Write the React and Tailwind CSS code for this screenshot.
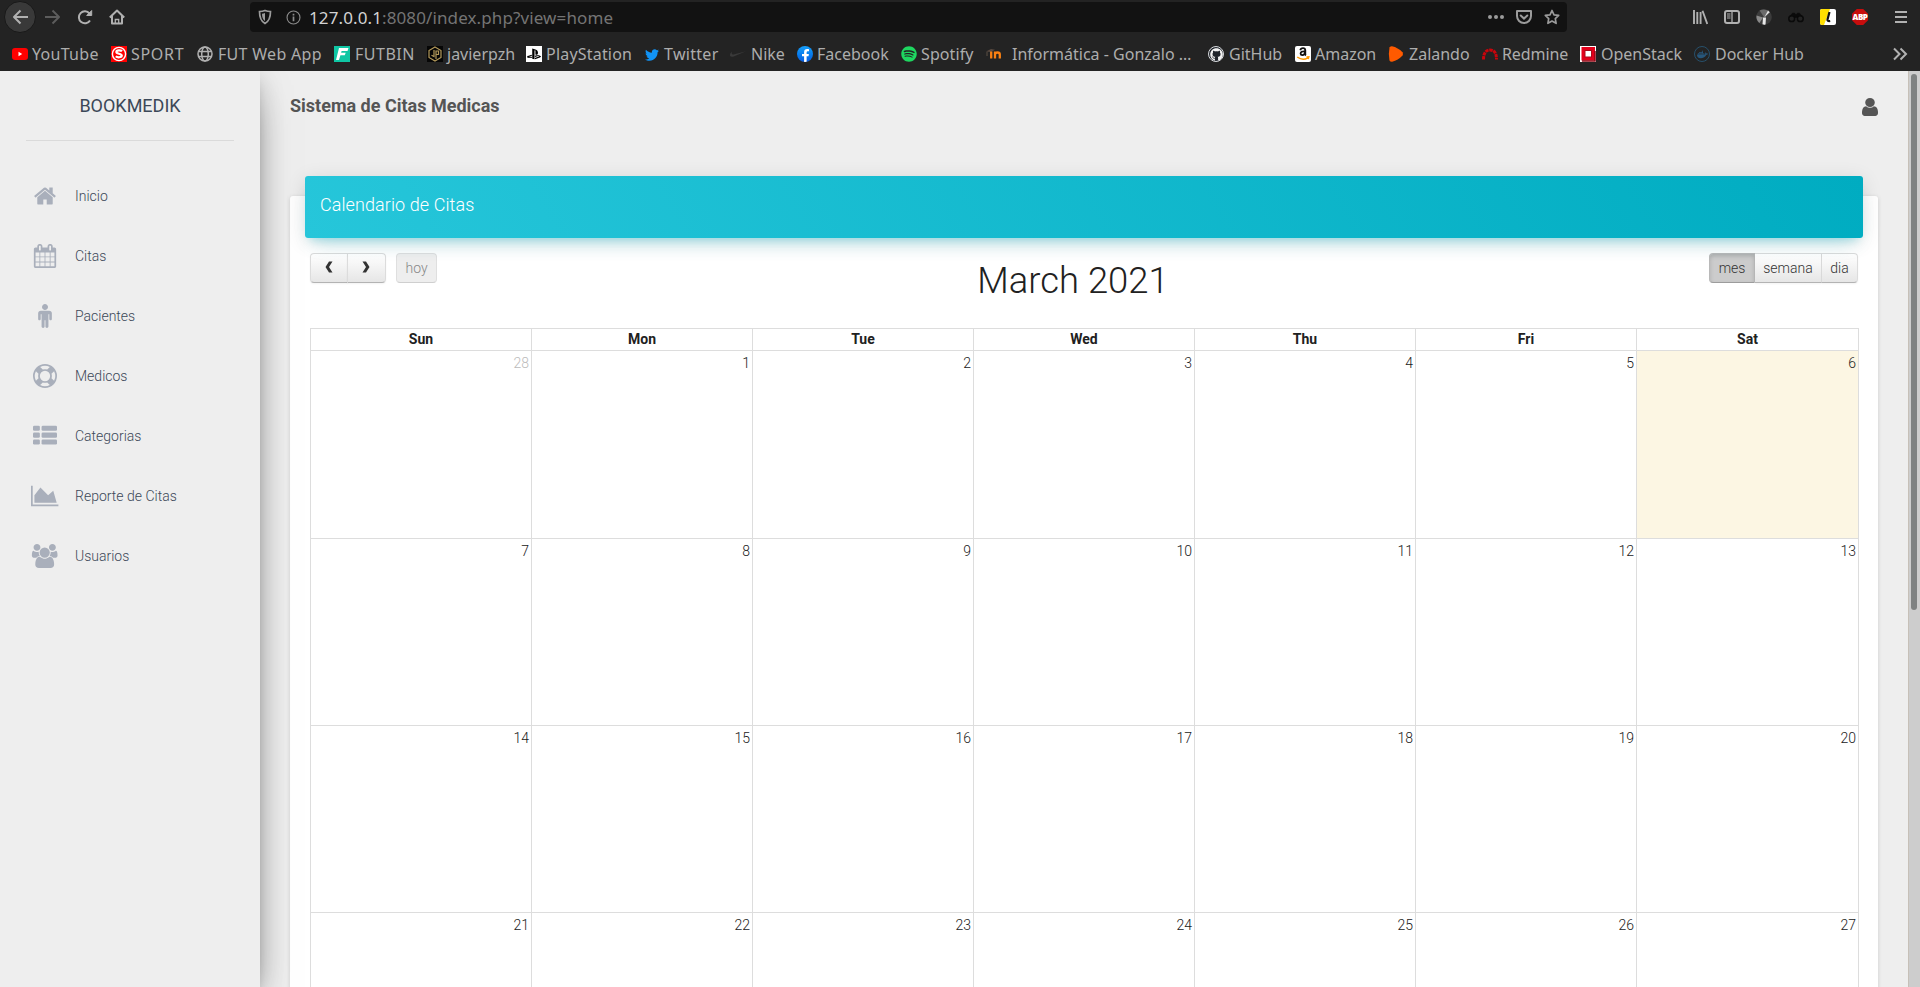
import React from "react";
import { FaTwitter, FaGithub, FaPlaystation, FaDocker, FaSpotify, FaFacebookF } from "react-icons/fa";
import { SiNike } from "react-icons/si";

/* ---------- bookmark favicons (16x16) ---------- */

const YouTubeIcon = () => (
  <svg viewBox="0 0 16 16" className="size-4">
    <rect x="0" y="2" width="16" height="12" rx="3" fill="#f00" />
    <path d="M6.5 5.8v4.4L10.2 8z" fill="#fff" />
  </svg>
);
const SportIcon = () => (
  <svg viewBox="0 0 16 16" className="size-4">
    <rect width="16" height="16" fill="#f00" />
    <circle cx="8" cy="8" r="6.6" fill="none" stroke="#fff" strokeWidth="1.4" />
    <path d="M11 5.2c-1.2-1.2-5.6-1.2-5.6.7 0 2.2 5.4 1.4 5.4 3.7 0 2-4.400 2.200-6 .7" fill="none" stroke="#fff" strokeWidth="2.200" />
  </svg>
);
const GlobeIcon = () => (
  <svg viewBox="0 0 16 16" className="size-4" fill="none" stroke="#b1b1b1" strokeWidth="1.5">
    <circle cx="8" cy="8" r="7" />
    <ellipse cx="8" cy="8" rx="3.300" ry="7" />
    <path d="M1.800 5.400h12.400M1.800 10.600h12.400" />
  </svg>
);
const FutbinIcon = () => (
  <svg viewBox="0 0 16 16" className="size-4">
    <rect width="16" height="16" fill="#0fc6a4" />
    <path d="M5 2h9.500l-1 3H7.600l-.5 1.700h4.600l-.9 2.600H6.400L5 14H2z" fill="#fff" />
  </svg>
);
const JavierIcon = () => (
  <svg viewBox="0 0 16 16" className="size-4" fill="none" stroke="#b3995a">
    <rect width="16" height="16" fill="#060606" stroke="none" />
    <path d="M8 1l6 3.500v7L8 15l-6-3.500v-7z" strokeWidth="1.200" />
    <path d="M7 4v6.500L4.500 9.200M9 13V5h2.500v3.500H9" strokeWidth="1.200" />
  </svg>
);
const PlayStationIcon = () => (
  <span className="flex size-4 items-center justify-center bg-white">
    <FaPlaystation className="size-[14px] text-black" />
  </span>
);
const TwitterIcon = () => <FaTwitter className="mt-px ml-[0.500px] size-[14px] text-[#1193f5]" />;
const NikeIcon = () => <SiNike className="size-4 text-[#3a3a3a]" />;
const FacebookIcon = () => (
  <span className="flex size-4 items-end justify-center overflow-hidden rounded-full bg-linear-to-b from-[#18a0fb] to-[#0a5be0]">
    <FaFacebookF className="h-[13px] w-[9px] text-white" />
  </span>
);
const SpotifyIcon = () => <FaSpotify className="size-4 text-[#1ed760]" />;
const MoodleIcon = () => (
  <svg viewBox="0 0 20 16" className="h-4 w-5">
    <path d="M0 5.500L5 3l4 .8-4 2.200z" fill="#5a4a40" />
    <path d="M1 6v4" stroke="#6b5a4c" strokeWidth=".8" />
    <path d="M5.200 12.500V5.500M9 12.500V5.500M9 8.500q0-2 2.400-2t2.400 2v4" fill="none" stroke="#f98012" strokeWidth="2.300" />
  </svg>
);
const GithubIcon = () => (
  <span className="flex size-4 items-center justify-center rounded-full border border-[#d8dade] bg-[#20252b]">
    <FaGithub className="size-[13px] text-[#f2f2f2]" />
  </span>
);
const AmazonIcon = () => (
  <svg viewBox="0 0 16 16" className="size-4">
    <rect width="16" height="16" rx="2" fill="#fff" />
    <path d="M5.300 4.300Q5.800 2.200 8 2.200t2.300 2.200V8q0 1 .7 1.400M10 5.400Q5.600 5 5.600 7.600 5.700 9.200 7.300 9.200 9.800 9 10 6" fill="none" stroke="#111" strokeWidth="1.800" />
    <path d="M2.200 11q5.600 4.200 10.600.8M11.500 11l2.300-.2-.6 2.300" fill="none" stroke="#f90" strokeWidth="1.500" />
  </svg>
);
const ZalandoIcon = () => (
  <svg viewBox="0 0 16 16" className="size-4">
    <path d="M1.500 1.500Q2.500.2 4 .3q6 1.300 10.500 6 1 1.700 0 3.300Q10 14.500 4.200 15.700 2.200 15.900 1.500 14.500.2 8 1.500 1.500z" fill="#ff5a00" />
  </svg>
);
const RedmineIcon = () => (
  <svg viewBox="0 0 16 16" className="size-4">
    <path d="M1.500 13.500Q1.500 4 8 4t6.500 9.500" fill="none" stroke="#c8050c" strokeWidth="3" strokeDasharray="3.400 .7" />
  </svg>
);
const OpenStackIcon = () => (
  <svg viewBox="0 0 16 16" className="size-4">
    <rect width="16" height="16" fill="#fff" />
    <rect x="1.500" y="1" width="13.500" height="13.500" fill="#e3001b" />
    <path d="M2 15h13V5" fill="none" stroke="#8e0714" strokeWidth="1.500" />
    <rect x="5" y="4.500" width="6.500" height="6.500" fill="#fff" stroke="#a90a1a" />
  </svg>
);
const DockerIcon = () => (
  <span className="flex size-4 items-center justify-center rounded-full border border-[#27506b]">
    <FaDocker className="size-[11px] text-[#27567a]" />
  </span>
);

const bookmarks = [
  { label: "YouTube", Icon: YouTubeIcon, box: "w-[99px] gap-1 tracking-[0.3px]" },
  { label: "SPORT", Icon: SportIcon, box: "w-[86px] gap-1 tracking-[0.7px]" },
  { label: "FUT Web App", Icon: GlobeIcon, box: "w-[137px] gap-[5px] tracking-[0.3px]" },
  { label: "FUTBIN", Icon: FutbinIcon, box: "w-[93px] gap-[5px] tracking-[0.5px]" },
  { label: "javierpzh", Icon: JavierIcon, box: "w-[99px] gap-1" },
  { label: "PlayStation", Icon: PlayStationIcon, box: "w-[118px] gap-1 tracking-[0.2px]" },
  { label: "Twitter", Icon: TwitterIcon, box: "w-[86px] gap-1 tracking-[0.3px]" },
  { label: "Nike", Icon: NikeIcon, box: "w-[67px] gap-[5px]" },
  { label: "Facebook", Icon: FacebookIcon, box: "w-[104px] gap-1" },
  { label: "Spotify", Icon: SpotifyIcon, box: "w-[85px] gap-1 tracking-[0.1px]" },
  { label: "Informática - Gonzalo …", Icon: MoodleIcon, box: "w-[222px] gap-[6px]" },
  { label: "GitHub", Icon: GithubIcon, box: "w-[87px] gap-[5px]" },
  { label: "Amazon", Icon: AmazonIcon, box: "w-[93px] gap-[4px]" },
  { label: "Zalando", Icon: ZalandoIcon, box: "w-[94px] gap-[5px]" },
  { label: "Redmine", Icon: RedmineIcon, box: "w-[98px] gap-1 tracking-[-0.1px]" },
  { label: "OpenStack", Icon: OpenStackIcon, box: "w-[114px] gap-[5px]" },
  { label: "Docker Hub", Icon: DockerIcon, box: "w-[130px] gap-[5px]" },
];

/* ---------- browser chrome ---------- */

const Stroke = ({ children, className }) => (
  <svg viewBox="0 0 16 16" fill="none" stroke="currentColor" strokeWidth="2" className={className}>
    {children}
  </svg>
);

function NavBar() {
  return (
    <div className="flex h-[34px] items-center pl-1 text-[#b1b1b1]">
      <div className="flex size-8 items-center justify-center rounded-full border border-[#191919] bg-[#393939]">
        <Stroke className="size-4">
          <path d="M8.500 1.500L2 8l6.500 6.500M2 8h14" strokeLinejoin="round" />
        </Stroke>
      </div>
      <Stroke className="ml-[9px] size-4 text-[#5c5c5c]">
        <path d="M7.500 1.500L14 8l-6.500 6.500M14 8H0" strokeLinejoin="round" />
      </Stroke>
      <Stroke className="ml-4 size-4">
        <path d="M13 11.500A6 6 0 1 1 12.500 4.500" />
        <path d="M14.700 1.500v5h-5z" fill="currentColor" strokeWidth="1" />
      </Stroke>
      <Stroke className="ml-4 size-4">
        <path d="M.8 8.500L8 1.500l7.200 7M3 7v7.500h10V7" strokeLinejoin="round" />
        <path d="M6.300 15v-4.500h3.400V15" strokeWidth="1.300" />
      </Stroke>
      <div className="ml-[125px] flex h-[30px] w-[1317px] items-center rounded bg-[#121212] pl-2">
        <svg viewBox="0 0 14 16" className="h-4 w-[14px] text-[#9b9b9b]">
          <path d="M7 1.500c2 .8 3.700 1 5.500 1 0 5.500-.8 9.500-5.500 12C2.300 12 1.500 8 1.500 2.500c1.800 0 3.500-.2 5.500-1z" fill="none" stroke="currentColor" strokeWidth="1.700" />
          <path d="M7 4v8c-2.200-1.600-3-4-3-7.300C5.200 4.600 6 4.400 7 4z" fill="currentColor" />
        </svg>
        <svg viewBox="0 0 16 16" className="ml-[14px] size-[15px] text-[#8b8b8b]">
          <circle cx="8" cy="8" r="6.900" fill="none" stroke="currentColor" strokeWidth="1.200" />
          <path d="M7.100 7h1.800v5H7.100zM7.100 4h1.800v1.800H7.100z" fill="currentColor" />
        </svg>
        <span className="ml-2 w-[1179px] pt-[2px] text-[17px] leading-[30px] tracking-[0.11px] whitespace-nowrap text-[#747474]">
          <span className="text-[#d2d2d2]">127.0.0.1</span>:8080/index.php?view=home
        </span>
        <svg viewBox="0 0 16 16" fill="currentColor" className="size-4 shrink-0 text-[#9b9b9b]">
          <circle cx="2" cy="8" r="2" /><circle cx="8" cy="8" r="2" /><circle cx="14" cy="8" r="2" />
        </svg>
        <Stroke className="ml-3 size-4 shrink-0 text-[#9b9b9b]">
          <path d="M1 2h14v5a7 7 0 0 1-14 0z" strokeLinejoin="round" />
          <path d="M4.700 6.500L8 9.600l3.300-3.100" strokeLinecap="round" />
        </Stroke>
        <Stroke className="ml-3 size-4 shrink-0 text-[#9b9b9b]">
          <path d="M8 1.500l2 4.300 4.700.6-3.400 3.200.8 4.700L8 12l-4.100 2.300.8-4.700L1.300 6.400 6 5.800z" strokeWidth="1.700" strokeLinejoin="round" />
        </Stroke>
      </div>
      <Stroke className="ml-[125px] size-4">
        <path d="M2 1v14M5.300 3v12M8.600 3v12M10.500 1.800L15.300 15" strokeWidth="1.900" />
      </Stroke>
      <Stroke className="ml-4 size-4">
        <rect x="1" y="2" width="14" height="12" rx="2" />
        <path d="M8 2v12" strokeWidth="1.300" />
        <path d="M3 5h3.500M3 7h3.500M3 9h3.500" strokeWidth="1" />
      </Stroke>
      <svg viewBox="0 0 16 16" className="ml-4 size-4">
        <circle cx="8" cy="8" r="7.800" fill="#3c3c3c" />
        <path d="M8 8L3.500 1.600Q8-1 13 2L9.500 8z" fill="#6a6a6a" />
        <path d="M8.500 8L12 1.600l1.800 1.700z" fill="#e0e0e0" />
        <path d="M7 8.500h3l-.5 7q-1.500.5-3-.2z" fill="#e8e8e8" />
        <path d="M.5 6.500l6.500 2-3.500 5.500Q0 11 .5 6.500z" fill="#8a8a8a" />
      </svg>
      <svg viewBox="0 0 16 16" className="ml-4 size-4" fill="none" stroke="#0a0a0a" strokeWidth="1.500">
        <circle cx="3.700" cy="9.700" r="2.900" /><circle cx="12.300" cy="9.700" r="2.900" />
        <path d="M2 7L4.500 4.200h2v1h3v-1h2L14 7l-3-.6-1.700 2H6.700L5 6.400z" fill="#0a0a0a" strokeWidth=".6" />
      </svg>
      <svg viewBox="0 0 16 16" className="ml-4 size-4">
        <rect width="16" height="16" rx="2" fill="#fff" />
        <path d="M2 0h8L4 16H2q-2 0-2-2V2q0-2 2-2z" fill="#ffdf00" />
        <path d="M9.500 3L7.500 10.500q-.4 2 2.700 1.500" fill="none" stroke="#111" strokeWidth="2.200" />
      </svg>
      <div className="ml-4 flex size-4 items-center justify-center bg-[#c70d0d] [clip-path:polygon(30%_0,70%_0,100%_30%,100%_70%,70%_100%,30%_100%,0_70%,0_30%)]">
        <span className="font-['Open_Sans',sans-serif] text-[8px] leading-none font-extrabold tracking-[-0.4px] text-white">ABP</span>
      </div>
      <Stroke className="ml-[25px] size-4">
        <path d="M2 3h12M2 8h12M2 13h12" />
      </Stroke>
    </div>
  );
}

function BookmarksBar() {
  return (
    <div className="flex h-[37px] items-center pl-3 text-[16px] text-[#adadad]">
      {bookmarks.map(({ label, Icon, box }) => (
        <div key={label} className={"flex shrink-0 items-center " + box}>
          <span className="flex h-5 shrink-0 items-center pt-[3px]"><span className="block min-w-4"><Icon /></span></span>
          <span className="pt-[3px] leading-6 whitespace-nowrap">{label}</span>
        </div>
      ))}
      <Stroke className="mt-[3px] ml-[68px] size-4 text-[#b1b1b1]">
        <path d="M2 2.500L7.500 8 2 13.500M8.500 2.500L14 8l-5.500 5.500" />
      </Stroke>
    </div>
  );
}

/* ---------- sidebar ---------- */

const rowsOf = [128, 640, 1152];

const menu = [
  { label: "Inicio", w: "0 0 1792 1792", cls: "w-6", icon: <path d="M1472 992v480q0 26-19 45t-45 19h-384v-384h-256v384h-384q-26 0-45-19t-19-45v-480q0-1 .5-3t.5-3l575-474 575 474q1 2 1 6zm223-69l-62 74q-8 9-21 11h-3q-13 0-21-7l-692-577-692 577q-12 8-24 7-13-2-21-11l-62-74q-8-10-7-23.500t11-21.500l719-599q32-26 76-26t76 26l244 204v-195q0-14 9-23t23-9h192q14 0 23 9t9 23v408l219 182q10 8 11 21.500t-7 23.500z" /> },
  { label: "Citas", w: "0 0 1792 1792", cls: "w-6", icon: <path d="M192 1664h288v-288h-288v288zm352 0h320v-288h-320v288zm-352-352h288v-320h-288v320zm352 0h320v-320h-320v320zm-352-384h288v-288h-288v288zm736 736h320v-288h-320v288zm-384-736h320v-288h-320v288zm768 736h288v-288h-288v288zm-384-352h320v-320h-320v320zm-352-864v-288q0-13-9.500-22.500t-22.500-9.500h-64q-13 0-22.500 9.500t-9.500 22.500v288q0 13 9.500 22.500t22.500 9.500h64q13 0 22.500-9.500t9.500-22.500zm736 864h288v-320h-288v320zm-384-384h320v-288h-320v288zm384 0h288v-288h-288v288zm32-480v-288q0-13-9.500-22.500t-22.500-9.500h-64q-13 0-22.500 9.500t-9.500 22.500v288q0 13 9.500 22.500t22.500 9.500h64q13 0 22.500-9.500t9.500-22.500zm384-64v1280q0 52-38 90t-90 38h-1408q-52 0-90-38t-38-90v-1280q0-52 38-90t90-38h128v-96q0-66 47-113t113-47h64q66 0 113 47t47 113v96h384v-96q0-66 47-113t113-47h64q66 0 113 47t47 113v96h128q52 0 90 38t38 90z" /> },
  { label: "Pacientes", w: "0 0 1792 1792", cls: "w-6", icon: <path d="M1408 704v416q0 40-28 68t-68 28-68-28-28-68v-352h-64v912q0 46-33 79t-79 33-79-33-33-79v-464h-64v464q0 46-33 79t-79 33-79-33-33-79v-912h-64v352q0 40-28 68t-68 28-68-28-28-68v-416q0-80 56-136t136-56h640q80 0 136 56t56 136zM1120 224q0 93-65.500 158.500t-158.500 65.500-158.500-65.500-65.500-158.500 65.500-158.500 158.500-65.500 158.500 65.500 65.500 158.500z" /> },
  { label: "Medicos", w: "0 0 1792 1792", cls: "w-6", icon: <path d="M896 0q182 0 348 71t286 191 191 286 71 348-71 348-191 286-286 191-348 71-348-71-286-191-191-286-71-348 71-348 191-286 286-191 348-71zm0 128q-190 0-361 90l194 194q82-28 167-28t167 28l194-194q-171-90-361-90zm-678 1129l194-194q-28-82-28-167t28-167l-194-194q-90 171-90 361t90 361zm678 407q190 0 361-90l-194-194q-82 28-167 28t-167-28l-194 194q171 90 361 90zm0-384q159 0 271.500-112.500t112.500-271.500-112.500-271.500-271.500-112.500-271.500 112.500-112.500 271.500 112.500 271.500 271.500 112.500zm484-217l194 194q90-171 90-361t-90-361l-194 194q28 82 28 167t-28 167z" /> },
  { label: "Categorias", w: "0 0 1792 1792", cls: "w-6", icon: <g>{rowsOf.map((y) => <g key={y}><rect x="0" y={y} width="512" height="384" rx="96" /><rect x="640" y={y} width="1152" height="384" rx="96" /></g>)}</g> },
  { label: "Reporte de Citas", w: "0 0 2048 1792", cls: "w-[27.4px]", icon: <path d="M2048 1536v128h-2048v-1536h128v1408h1920zm-384-1024l256 896h-1664v-576l448-576 576 576z" /> },
  { label: "Usuarios", w: "0 0 2048 1792", cls: "w-[27.4px]", icon: <path d="M657 896q-162 5-265 128h-134q-82 0-138-40.500t-56-118.500q0-353 124-353 6 0 43.500 21t97.500 42.500 119 21.500q67 0 133-23-5 37-5 66 0 139 81 256zm1071 637q0 120-73 189.500t-194 69.500h-874q-121 0-194-69.500t-73-189.500q0-53 3.500-103.500t14-109 26.500-108.500 43-97.500 62-81 85.500-53.500 111.500-20q10 0 43 21.500t73 48 107 48 135 21.500 135-21.500 107-48 73-48 43-21.500q61 0 111.500 20t85.500 53.500 62 81 43 97.500 26.500 108.500 14 109 3.500 103.500zm-1024-1277q0 106-75 181t-181 75-181-75-75-181 75-181 181-75 181 75 75 181zm704 384q0 159-112.500 271.500t-271.500 112.500-271.500-112.500-112.500-271.500 112.500-271.500 271.500-112.500 271.500 112.500 112.500 271.500zm576 225q0 78-56 118.500t-138 40.500h-134q-103-123-265-128 81-117 81-256 0-29-5-66 66 23 133 23 59 0 119-21.500t97.500-42.500 43.500-21q124 0 124 353zm-128-609q0 106-75 181t-181 75-181-75-75-181 75-181 181-75 181 75 75 181z" /> },
];

function Sidebar() {
  return (
    <aside className="z-10 flex w-[260px] shrink-0 flex-col bg-[#eee] shadow-[0_16px_38px_-12px_rgba(0,0,0,0.56),0_4px_25px_0_rgba(0,0,0,0.12),0_8px_10px_-5px_rgba(0,0,0,0.2)]">
      <div className="mx-[26px] flex h-[70px] items-center justify-center border-b border-[#dadada] text-[18px] text-[#3c4858]">BOOKMEDIK</div>
      <nav className="flex flex-col gap-[10px] pt-[30px]">
        {menu.map((m) => (
          <a key={m.label} className="flex h-[50px] items-center pl-[30px]">
            <span className="flex w-[30px] shrink-0 justify-center">
              <svg viewBox={m.w} fill="#a9afbb" className={"h-6 shrink-0 " + m.cls}>{m.icon}</svg>
            </span>
            <span className="ml-[15px] text-[14px] font-light text-[#3c4858]">{m.label}</span>
          </a>
        ))}
      </nav>
    </aside>
  );
}

/* ---------- calendar ---------- */

const days = ["Sun", "Mon", "Tue", "Wed", "Thu", "Fri", "Sat"];
const weeks = [
  { h: "h-[188px]", d: [28, 1, 2, 3, 4, 5, 6] },
  { h: "h-[187px]", d: [7, 8, 9, 10, 11, 12, 13] },
  { h: "h-[187px]", d: [14, 15, 16, 17, 18, 19, 20] },
  { h: "h-[187px]", d: [21, 22, 23, 24, 25, 26, 27] },
];
const cols = "grid grid-cols-[repeat(6,221px)_222px]";
const btn = "flex h-[30px] items-center justify-center border border-[#dcdcdc] border-b-[#b3b3b3] bg-linear-to-b from-white to-[#e6e6e6] text-[14px] font-light text-[#333] shadow-[0_1px_2px_rgba(0,0,0,0.05)]";

function Toolbar() {
  return (
    <div className="flex h-[75px] items-start justify-between">
      <div className="flex w-[300px]">
        <button className={btn + " w-[38px] rounded-l pb-[3px]"}>
          <svg viewBox="0 0 8 12" className="mt-px h-3 w-2"><path d="M4 0.500h3.500L4 6l3.500 5.500H4L.5 6z" fill="#333" /></svg>
        </button>
        <button className={btn + " -ml-px w-[39px] rounded-r pb-[3px]"}>
          <svg viewBox="0 0 8 12" className="mt-px mr-px h-3 w-2"><path d="M4 0.500H.5L4 6 .5 11.500H4L7.500 6z" fill="#333" /></svg>
        </button>
        <button className="ml-[10px] flex h-[30px] w-[41px] items-center justify-center rounded border border-[#dfdfdf] border-b-[#cfcfcf] bg-[#eeeeee] text-[14px] font-light text-[#888]">hoy</button>
      </div>
      <h2 className="mt-2 w-[900px] pr-[22px] text-center text-[36.4px] leading-[40px] font-light text-[#212121]">March 2021</h2>
      <div className="flex w-[300px] justify-end">
        <button className="flex h-[30px] w-[46px] items-center justify-center rounded-l border border-[#b9b9b9] border-b-[#9c9c9c] bg-[#ccc] text-[14px] font-light text-[#333] shadow-[inset_0_2px_4px_rgba(0,0,0,0.15)]">mes</button>
        <button className={btn + " w-[67px] border-l-0"}>semana</button>
        <button className={btn + " w-9 rounded-r border-l-0"}>dia</button>
      </div>
    </div>
  );
}

function Calendar() {
  return (
    <div className="w-[1549px] border-t border-l border-[#ddd]">
      <div className={cols}>
        {days.map((d) => (
          <div key={d} className="h-[22px] border-r border-b border-[#ddd] text-center text-[14px] leading-[21px] font-bold text-[#212121]">{d}</div>
        ))}
      </div>
      {weeks.map((w) => (
        <div key={w.d[0]} className={cols + " " + w.h}>
          {w.d.map((n) => (
            <div
              key={n}
              className={
                "border-r border-b border-[#ddd] pt-[2px] pr-[2px] text-right text-[14px] leading-5 font-light " +
                (n === 28 ? "text-[#bbb]" : "text-[#212121]") + (n === 6 ? " bg-[#fcf6e3]" : "")
              }
            >
              {n}
            </div>
          ))}
        </div>
      ))}
    </div>
  );
}

export default function App() {
  return (
    <div className="flex h-[987px] w-[1920px] flex-col overflow-hidden font-['Roboto',sans-serif]">
      <header className="h-[71px] shrink-0 bg-[#232323] font-['Noto_Sans',sans-serif]">
        <NavBar />
        <BookmarksBar />
      </header>
      <div className="flex h-[916px] overflow-hidden bg-[#eee]">
        <Sidebar />
        <main className="flex h-[916px] w-[1648px] flex-col px-[30px]">
          <div className="flex h-[70px] shrink-0 items-center justify-between pb-[2px]">
            <h1 className="text-[18px] font-bold text-[#555]">Sistema de Citas Medicas</h1>
            <svg viewBox="256 128 1280 1536" preserveAspectRatio="none" fill="#555" className="mt-[3px] h-[18px] w-4">
              <path d="M1536 1399q0 109-62.500 187t-150.500 78h-854q-88 0-150.500-78t-62.500-187q0-85 8.500-160.500t31.500-152 58.500-131 94-89 134.500-34.500q131 128 313 128t313-128q76 0 134.500 34.500t94 89 58.500 131 31.500 152 8.500 160.500zm-256-887q0 159-112.500 271.500t-271.500 112.500-271.500-112.500-112.500-271.500 112.500-271.500 271.500-112.500 271.500 112.500 112.500 271.500z" />
            </svg>
          </div>
          <section className="mt-[55px] h-[1000px] w-[1588px] shrink-0 rounded-[3px] bg-white shadow-[0_1px_4px_0_rgba(0,0,0,0.14)]">
            <div className="mx-[15px] h-[42px] rounded-[3px]">
              <div className="-translate-y-5 h-[62px] rounded-[3px] bg-[linear-gradient(60deg,#26c6da,#00acc1)] px-[15px] pt-[15px] text-[18px] leading-[27px] font-light tracking-[0.08px] text-white shadow-[0_12px_20px_-10px_rgba(0,188,212,0.28),0_4px_20px_0_rgba(0,0,0,0.12),0_7px_8px_-5px_rgba(0,188,212,0.2)]">
                Calendario de Citas
              </div>
            </div>
            <div className="px-5 pt-[15px]">
              <Toolbar />
              <Calendar />
            </div>
          </section>
        </main>
        <div className="w-3 shrink-0 border-l border-[#c6c0b8] bg-[#cdcdcd] pt-[3px] pl-[2px]">
          <div className="h-[536px] w-[6px] rounded-full bg-[#7f8282]" />
        </div>
      </div>
    </div>
  );
}
